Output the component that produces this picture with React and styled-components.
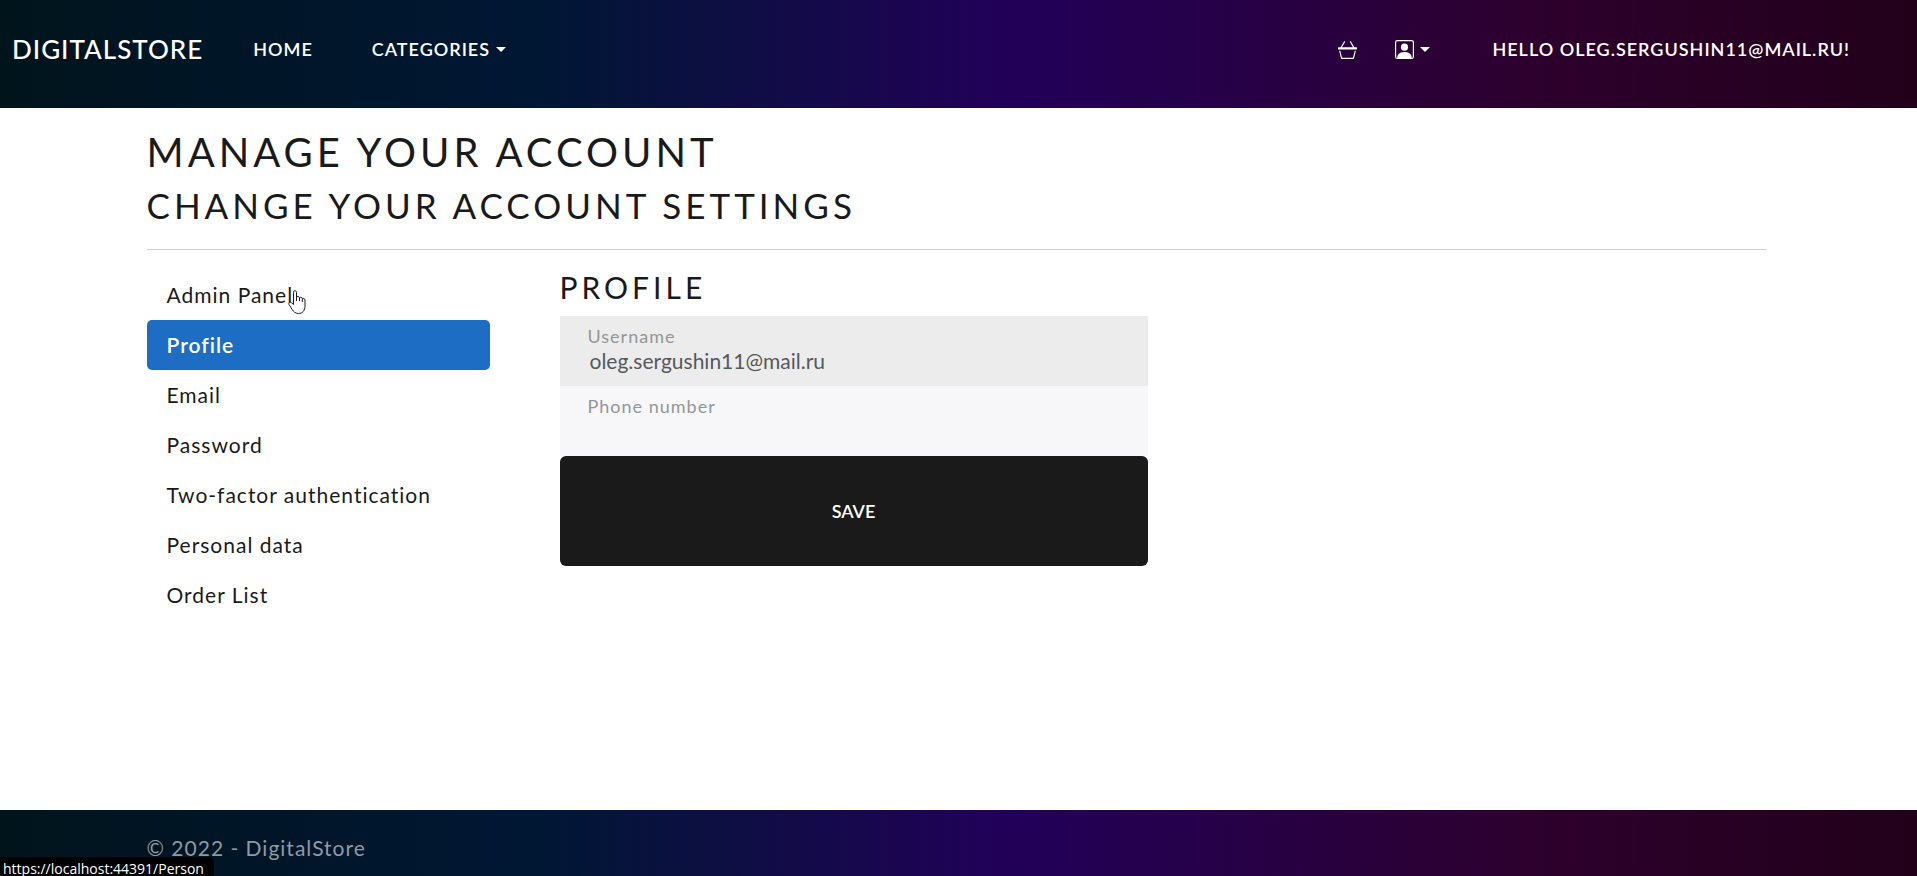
import React from 'react';
import styled, { createGlobalStyle, css } from 'styled-components';
import { BsBasket3, BsPersonSquare } from 'react-icons/bs';

const GlobalStyle = createGlobalStyle`
  *, *::before, *::after { box-sizing: border-box; }
  body {
    margin: 0;
    background: #fff;
    color: #1a1a1a;
    font-family: Lato, "Liberation Sans", sans-serif;
    font-size: 21px;
    line-height: 30px;
    letter-spacing: 1px;
  }
`;

const band = css`
  background: linear-gradient(90deg, #00141c 0%, #001734 28%, #220059 53%, #2d002d 80%, #22001a 100%);
`;

const Page = styled.div`
  min-height: 100vh;
  display: flex;
  flex-direction: column;
`;

const Header = styled.header`
  ${band}
  height: 108px;
  padding: 24px 38px 34px 12px;
  display: flex;
  align-items: center;
`;

const Brand = styled.a`
  color: #fff;
  font-size: 26px;
  font-weight: 500;
  text-decoration: none;
  text-transform: uppercase;
  margin-right: 20px;
`;

const navItem = css`
  display: inline-flex;
  align-items: center;
  gap: 6px;
  margin: 0;
  padding: 0 29px 0 30px;
  border: 0;
  background: none;
  color: #fff;
  font: inherit;
  font-size: 18px;
  font-weight: 600;
  letter-spacing: 1px;
  text-decoration: none;
  text-transform: uppercase;
`;
const NavLink = styled.a`${navItem}`;
const NavButton = styled.button`${navItem}`;

const IconGroup = styled.div`
  display: flex;
  align-items: center;
  gap: 38px;
  margin-left: auto;
  margin-right: 32px;
  ${NavLink}, ${NavButton} { padding: 0; }
`;

const Caret = styled.span`
  border-top: 5px solid #fff;
  border-left: 5px solid transparent;
  border-right: 5px solid transparent;
`;

const Container = styled.div`
  width: 100%;
  max-width: 1650px;
  margin: 0 auto;
  padding: 0 17px 0 13px;
`;

const Main = styled.main`
  flex: 1;
  padding: 20px 0;
`;

const headings = { 1: [40, 48], 2: [35, 46], 3: [30, 34] };
const Heading = styled.h1`
  margin: 0 0 ${(p) => p.$gap}px;
  font-size: ${(p) => headings[p.$level][0]}px;
  line-height: ${(p) => headings[p.$level][1]}px;
  font-weight: 400;
  letter-spacing: 4px;
  text-transform: uppercase;
`;

const Rule = styled.hr`
  margin: 0 0 20px;
  border: 0;
  border-top: 1px solid #d1d1d1;
`;

const Columns = styled.div`
  display: grid;
  grid-template-columns: 343px minmax(0, 588px);
  column-gap: 70px;
`;

const SideNav = styled.nav`
  display: flex;
  flex-direction: column;
`;

const SideLink = styled.a`
  position: relative;
  padding: 10px 20px;
  border-radius: 5px;
  color: ${(p) => (p.$active ? '#fff' : '#1a1a1a')};
  background: ${(p) => (p.$active ? '#1c6dc3' : 'transparent')};
  font-weight: ${(p) => (p.$active ? 600 : 400)};
  text-decoration: none;
`;

const Pointer = styled.svg`
  position: absolute;
  left: 141px;
  top: 20px;
  pointer-events: none;
`;

const Form = styled.form`
  display: flex;
  flex-direction: column;
`;

const Field = styled.div`
  display: flex;
  flex-direction: column;
  height: 70px;
  padding: 8px 28px;
  background: ${(p) => (p.$disabled ? '#ececec' : '#f7f7f9')};
`;

const Label = styled.label`
  color: #939697;
  font-size: 18px;
  line-height: 24px;
`;

const Input = styled.input`
  width: 100%;
  height: 26px;
  padding: 0 2px;
  border: 0;
  outline: 0;
  background: transparent;
  color: #55595c;
  font: inherit;
  letter-spacing: 0;
`;

const SaveButton = styled.button`
  height: 110px;
  border: 0;
  border-radius: 6px;
  background: #1a1a1a;
  color: #fff;
  font: inherit;
  font-size: 18px;
  font-weight: 600;
  text-transform: uppercase;
`;

const Footer = styled.footer`
  ${band}
  height: 66px;
  color: #919aa1;
  line-height: 75px;
  overflow: hidden;
`;

const StatusBubble = styled.div`
  position: fixed;
  left: 0;
  bottom: 0;
  width: 214px;
  height: 19px;
  padding-left: 3px;
  border-top-right-radius: 5px;
  background: #000;
  color: #fff;
  font: 14px/24px "Open Sans", sans-serif;
  letter-spacing: 0;
  white-space: nowrap;
  overflow: hidden;
`;

const links = ['Admin Panel', 'Profile', 'Email', 'Password', 'Two-factor authentication', 'Personal data', 'Order List'];

function HandPointer() {
  return (
    <Pointer width="18" height="24" viewBox="0 0 18 24" aria-hidden="true">
      <path
        d="M5.5 14.5V2.3C5.5.2 8.5.2 8.5 2.3V7c.6-1 2.7-.8 3 .7.8-.8 2.6-.4 2.8.9 1-.6 2.7-.1 2.7 1.4V16c0 4.5-2.5 7.5-6.5 7.5-3 0-4.8-1.5-6.3-4L1 14.5C.1 12.8 2 11.5 3.3 12.6Z"
        fill="#fff"
        stroke="#1a1a2a"
      />
      <path d="M8.5 7v4M11.5 7.7V11M14.3 8.6V12" fill="none" stroke="#1a1a2a" />
    </Pointer>
  );
}

export default function App() {
  return (
    <Page>
      <GlobalStyle />
      <Header>
        <Brand href="#">DigitalStore</Brand>
        <NavLink href="#">Home</NavLink>
        <NavButton type="button">Categories<Caret /></NavButton>
        <IconGroup>
          <NavLink href="#" aria-label="Basket"><BsBasket3 size={19} /></NavLink>
          <NavButton type="button" aria-label="Account"><BsPersonSquare size={19} /><Caret /></NavButton>
        </IconGroup>
        <NavLink href="#">Hello oleg.sergushin11@mail.ru!</NavLink>
      </Header>
      <Main>
        <Container>
          <Heading $level={1} $gap={6}>Manage your account</Heading>
          <Heading as="h2" $level={2} $gap={21}>Change your account settings</Heading>
          <Rule />
          <Columns>
            <SideNav>
              {links.map((name) => (
                <SideLink key={name} href="#" $active={name === 'Profile'}>
                  {name}
                  {name === 'Admin Panel' && <HandPointer />}
                </SideLink>
              ))}
            </SideNav>
            <Form>
              <Heading as="h3" $level={3} $gap={12}>Profile</Heading>
              <Field $disabled>
                <Label htmlFor="username">Username</Label>
                <Input id="username" disabled defaultValue="oleg.sergushin11@mail.ru" />
              </Field>
              <Field>
                <Label htmlFor="phone">Phone number</Label>
                <Input id="phone" type="tel" />
              </Field>
              <SaveButton type="button">Save</SaveButton>
            </Form>
          </Columns>
        </Container>
      </Main>
      <Footer>
        <Container>© 2022 - DigitalStore</Container>
      </Footer>
      <StatusBubble>https://localhost:44391/Person</StatusBubble>
    </Page>
  );
}
